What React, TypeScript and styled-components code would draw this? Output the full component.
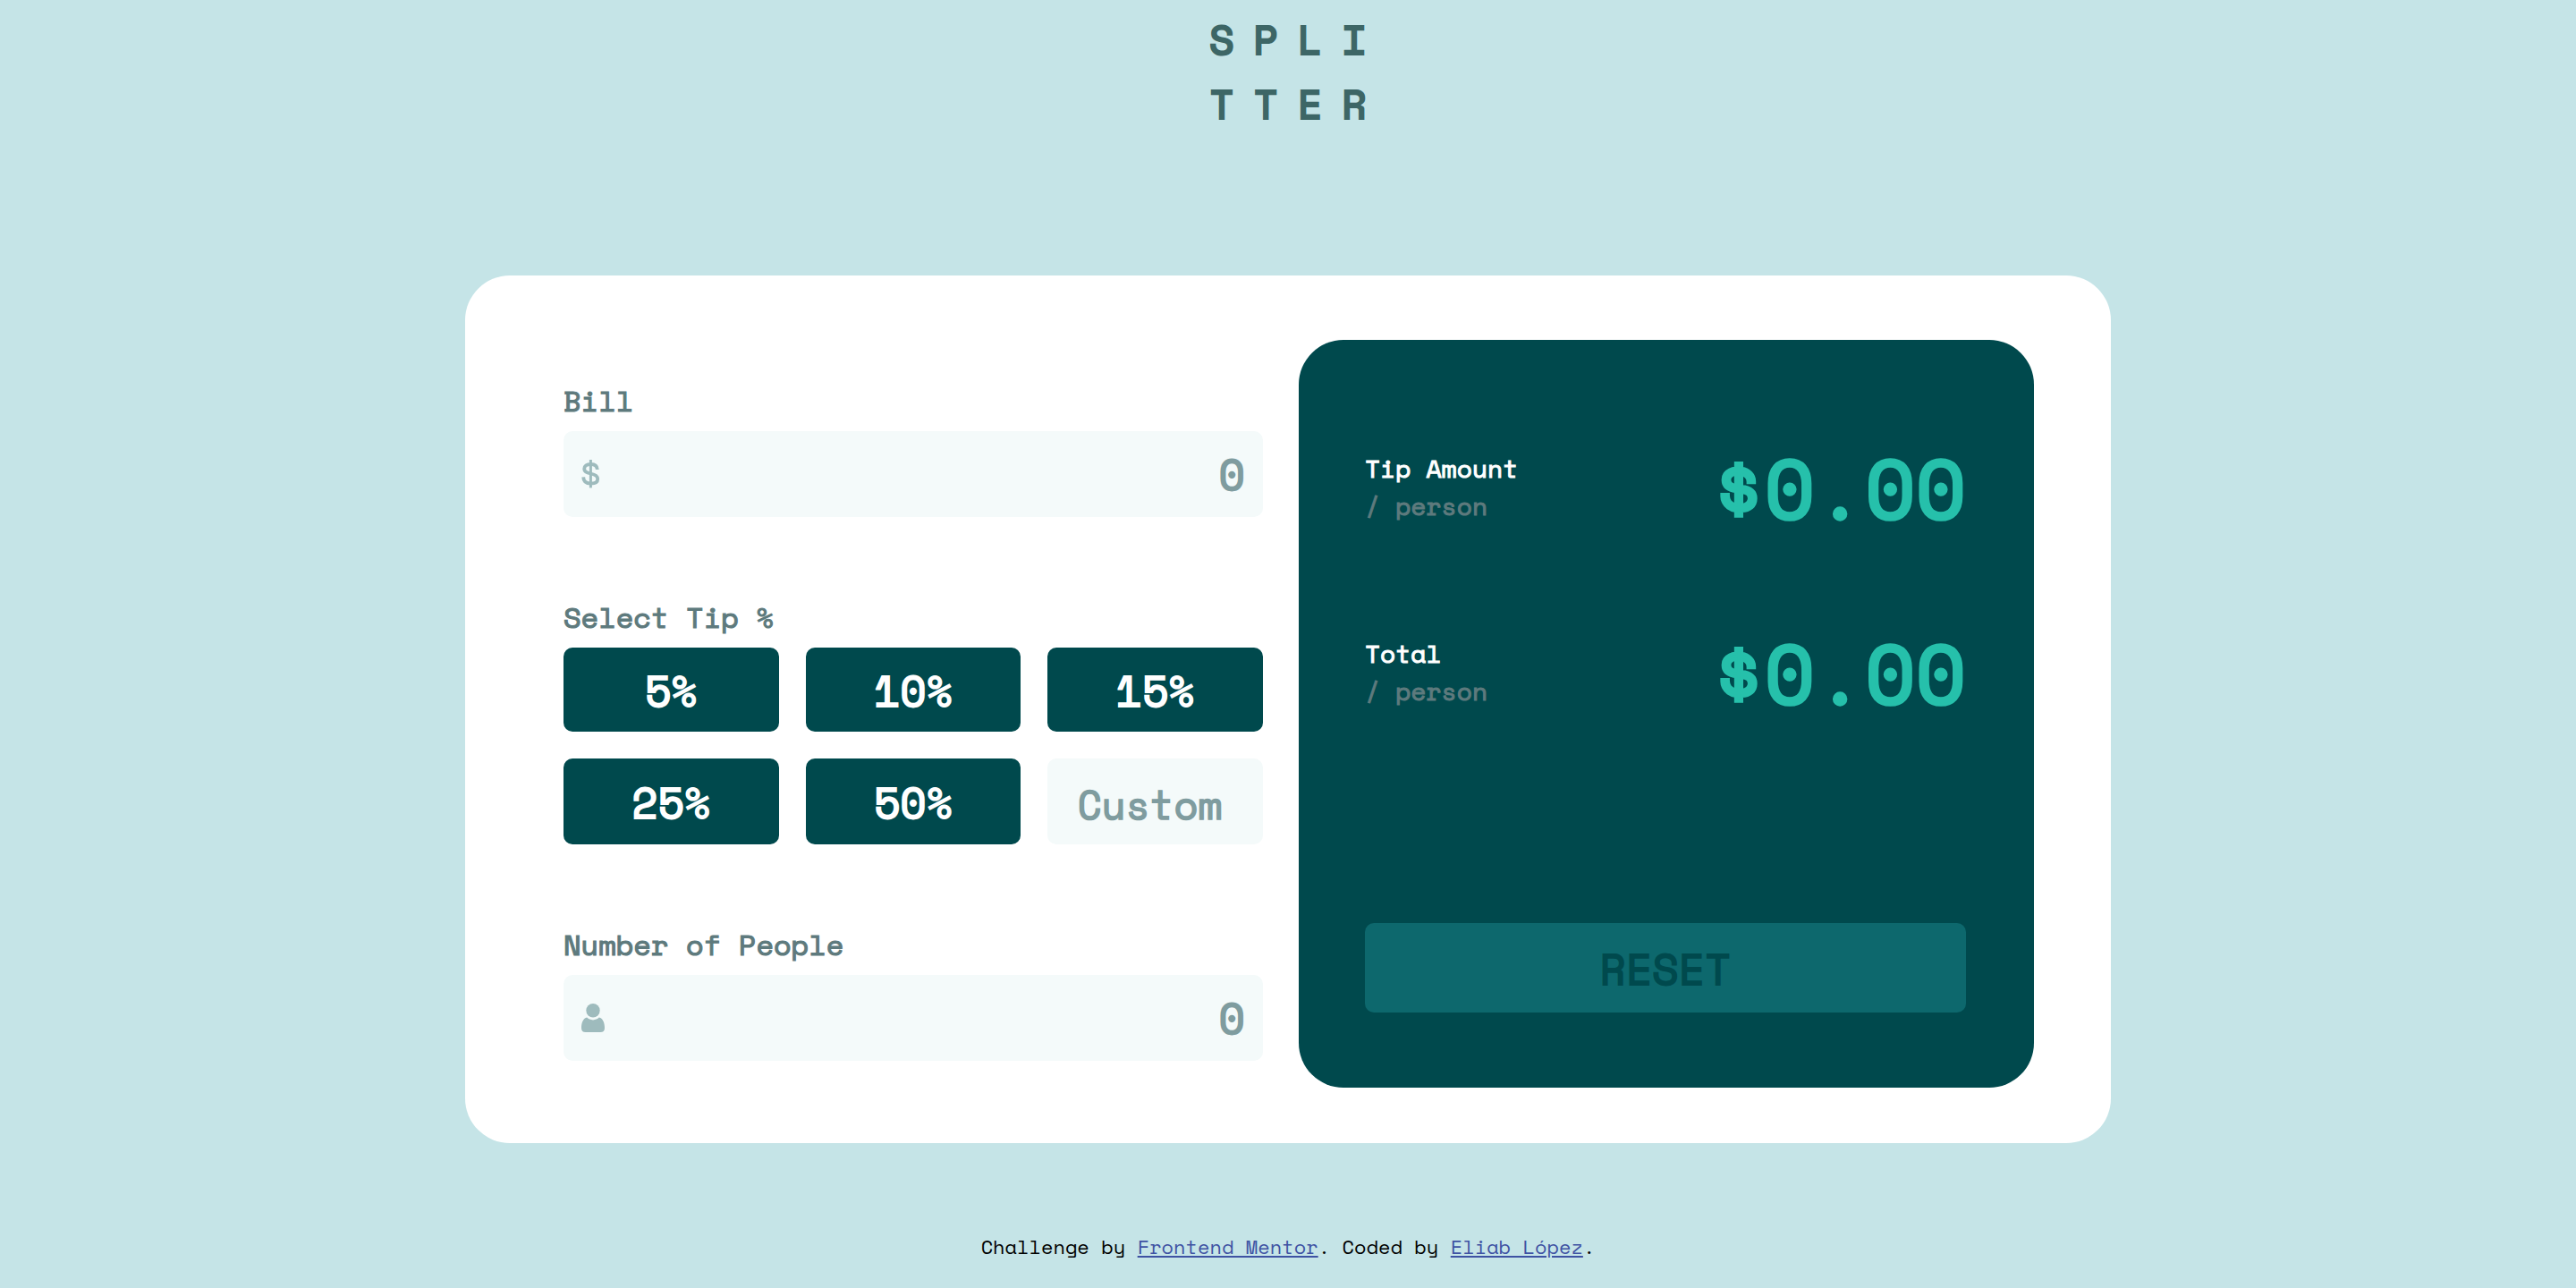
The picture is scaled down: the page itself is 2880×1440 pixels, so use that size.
import React, { useState } from "react";
import styled, { createGlobalStyle, css } from "styled-components";

const color = {
  page: "#c5e4e7",
  card: "#ffffff",
  dark: "#00494d",
  mid: "#0d686d",
  strong: "#26c0ab",
  label: "#5e7a7d",
  placeholder: "#7f9c9f",
  icon: "#9ebbbd",
  field: "#f4fafa",
  logo: "#3d6666",
  link: "#3e52a3",
};

const GlobalStyle = createGlobalStyle`
  *, *::before, *::after { box-sizing: border-box; }
  body {
    margin: 0;
    background: ${color.page};
    font-family: "Space Mono", "DejaVu Sans Mono", "Liberation Mono", monospace;
  }
  button, input { font: inherit; }
`;

/* Regular cut of the typeface, thickened evenly in proportion to its size. */
const heavy = css`
  font-weight: 400;
  -webkit-text-stroke: calc(1em / 26) currentColor;
`;

const Page = styled.div`
  display: flex;
  flex-direction: column;
  align-items: center;
  min-height: 100vh;
  padding: 8px 24px 28px;
`;

const Logo = styled.h1`
  margin: 0 0 156px;
  padding-left: 20px;
  color: ${color.logo};
  font-size: 48px;
  font-weight: 700;
  line-height: 72px;
  letter-spacing: 20px;
`;

const LogoLine = styled.span`
  display: block;
`;

const Card = styled.main`
  display: grid;
  grid-template-columns: minmax(0, 39fr) minmax(0, 41fr);
  gap: 40px;
  width: 100%;
  max-width: 1840px;
  padding: 72px 86px 62px 110px;
  border-radius: 50px;
  background: ${color.card};

  @media (max-width: 1500px) {
    grid-template-columns: minmax(0, 1fr);
    padding: 48px;
  }
`;

const Form = styled.form`
  display: flex;
  flex-direction: column;
  gap: 88px;
  padding: 44px 0 30px;
`;

const Field = styled.div`
  display: flex;
  flex-direction: column;
  gap: 10px;
`;

const Group = styled.fieldset`
  min-width: 0;
  margin: 0;
  padding: 0;
  border: 0;
`;

const labelText = css`
  ${heavy}
  color: ${color.label};
  font-size: 32px;
  line-height: 48px;
`;

const Label = styled.label`
  ${labelText}
`;

const Legend = styled.legend`
  ${labelText}
  padding: 0 0 10px;
`;

const InputBox = styled.div`
  display: flex;
  align-items: center;
  height: 96px;
  padding: 0 20px;
  border-radius: 10px;
  background: ${color.field};

  svg {
    flex: none;
  }
`;

const NumberInput = styled.input`
  ${heavy}
  flex: 1;
  min-width: 0;
  height: 100%;
  padding: 0 0 2px;
  border: 0;
  outline: 0;
  background: transparent;
  color: ${color.dark};
  font-size: 48px;
  text-align: right;

  &::placeholder {
    ${heavy}
    color: ${color.placeholder};
    opacity: 1;
  }
`;

const Tips = styled.div`
  display: grid;
  grid-template-columns: repeat(3, minmax(0, 1fr));
  grid-auto-rows: minmax(94px, auto);
  gap: 30px;
`;

const TipButton = styled.button<{ $active: boolean }>`
  ${heavy}
  padding: 0;
  border: 0;
  border-radius: 10px;
  background: ${(p) => (p.$active ? color.strong : color.dark)};
  color: ${(p) => (p.$active ? color.dark : "#ffffff")};
  font-size: 48px;
  cursor: pointer;
`;

const CustomInput = styled.input`
  ${heavy}
  width: 100%;
  min-width: 0;
  height: 96px;
  padding: 6px 12px 0 0;
  border: 0;
  border-radius: 10px;
  outline: 0;
  background: ${color.field};
  color: ${color.dark};
  font-size: 44px;
  text-align: center;

  &::placeholder {
    ${heavy}
    color: ${color.placeholder};
    opacity: 1;
  }
`;

const Panel = styled.section`
  display: flex;
  flex-direction: column;
  gap: 123px;
  padding: 123px 76px 84px 74px;
  border-radius: 50px;
  background: ${color.dark};
`;

const ResultRow = styled.div`
  display: flex;
  justify-content: space-between;
  align-items: flex-start;
`;

const ResultName = styled.div`
  ${heavy}
  color: #ffffff;
  font-size: 28px;
  line-height: 42px;
`;

const PerPerson = styled.div`
  ${heavy}
  color: ${color.label};
`;

const Amount = styled.output`
  ${heavy}
  color: ${color.strong};
  font-size: 92px;
  line-height: 84px;
`;

const ResetButton = styled.button`
  ${heavy}
  height: 100px;
  margin-top: auto;
  border: 0;
  border-radius: 10px;
  background: ${color.mid};
  color: ${color.dark};
  font-size: 48px;
  cursor: pointer;
`;

const Footer = styled.footer`
  margin-top: 99px;
  color: #000000;
  font-size: 22px;
  line-height: 33px;
  text-align: center;
`;

const FooterLink = styled.a`
  color: ${color.link};
`;

function DollarIcon() {
  return (
    <svg width="22" height="32" viewBox="0 0 22 32" fill="none" stroke={color.icon} strokeWidth="3.8" aria-hidden="true">
      <path d="M10.4 0V31.4" strokeWidth="3" />
      <path d="M17.8 11C17.6 7.2 15 5 10.6 5C6 5 3.2 7 3.2 10.2C3.2 13.4 5.6 14.5 10.4 15.5C15.4 16.5 18.2 17.8 18.2 21.4C18.2 24.6 15.4 26.5 10.6 26.5C5.4 26.5 2.3 24.2 2.2 19.4" />
    </svg>
  );
}

function PersonIcon() {
  return (
    <svg width="26" height="32" viewBox="0 0 26 32" fill={color.icon} aria-hidden="true">
      <circle cx="13" cy="7.8" r="7.7" />
      <path d="M6.2 15.6C8 17.4 10.3 18.4 13 18.4C15.7 18.4 18 17.4 19.8 15.6C23.8 16.6 26 21 26 27.4C26 30.4 24.2 32 21.4 32H4.6C1.8 32 0 30.4 0 27.4C0 21 2.2 16.6 6.2 15.6Z" />
    </svg>
  );
}

function Result({ name, value }: { name: string; value: number }) {
  return (
    <ResultRow>
      <ResultName>
        {name}
        <PerPerson>/ person</PerPerson>
      </ResultName>
      <Amount>${value.toFixed(2)}</Amount>
    </ResultRow>
  );
}

const presets = [5, 10, 15, 25, 50];

export default function App() {
  const [bill, setBill] = useState("");
  const [people, setPeople] = useState("");
  const [preset, setPreset] = useState<number | null>(null);
  const [custom, setCustom] = useState("");

  const count = Number(people) || 0;
  const total = Number(bill) || 0;
  const rate = (preset ?? (Number(custom) || 0)) / 100;
  const tipEach = count > 0 ? (total * rate) / count : 0;
  const totalEach = count > 0 ? (total * (1 + rate)) / count : 0;

  const reset = () => {
    setBill("");
    setPeople("");
    setPreset(null);
    setCustom("");
  };

  return (
    <>
      <GlobalStyle />
      <Page>
        <Logo>
          <LogoLine>SPLI</LogoLine>
          <LogoLine>TTER</LogoLine>
        </Logo>
        <Card>
          <Form onSubmit={(e) => e.preventDefault()}>
            <Field>
              <Label htmlFor="bill">Bill</Label>
              <InputBox>
                <DollarIcon />
                <NumberInput id="bill" inputMode="decimal" placeholder="0" value={bill} onChange={(e) => setBill(e.target.value)} />
              </InputBox>
            </Field>
            <Group>
              <Legend>Select Tip %</Legend>
              <Tips>
                {presets.map((p) => (
                  <TipButton
                    key={p}
                    type="button"
                    $active={preset === p}
                    onClick={() => {
                      setPreset(p);
                      setCustom("");
                    }}
                  >
                    {p}%
                  </TipButton>
                ))}
                <CustomInput
                  aria-label="Custom"
                  inputMode="decimal"
                  placeholder="Custom"
                  value={custom}
                  onChange={(e) => {
                    setCustom(e.target.value);
                    setPreset(null);
                  }}
                />
              </Tips>
            </Group>
            <Field>
              <Label htmlFor="people">Number of People</Label>
              <InputBox>
                <PersonIcon />
                <NumberInput id="people" inputMode="numeric" placeholder="0" value={people} onChange={(e) => setPeople(e.target.value)} />
              </InputBox>
            </Field>
          </Form>
          <Panel>
            <Result name="Tip Amount" value={tipEach} />
            <Result name="Total" value={totalEach} />
            <ResetButton type="button" onClick={reset}>
              RESET
            </ResetButton>
          </Panel>
        </Card>
        <Footer>
          Challenge by <FooterLink href="#frontend-mentor">Frontend Mentor</FooterLink>. Coded by{" "}
          <FooterLink href="#eliab-lopez">Eliab López</FooterLink>.
        </Footer>
      </Page>
    </>
  );
}
